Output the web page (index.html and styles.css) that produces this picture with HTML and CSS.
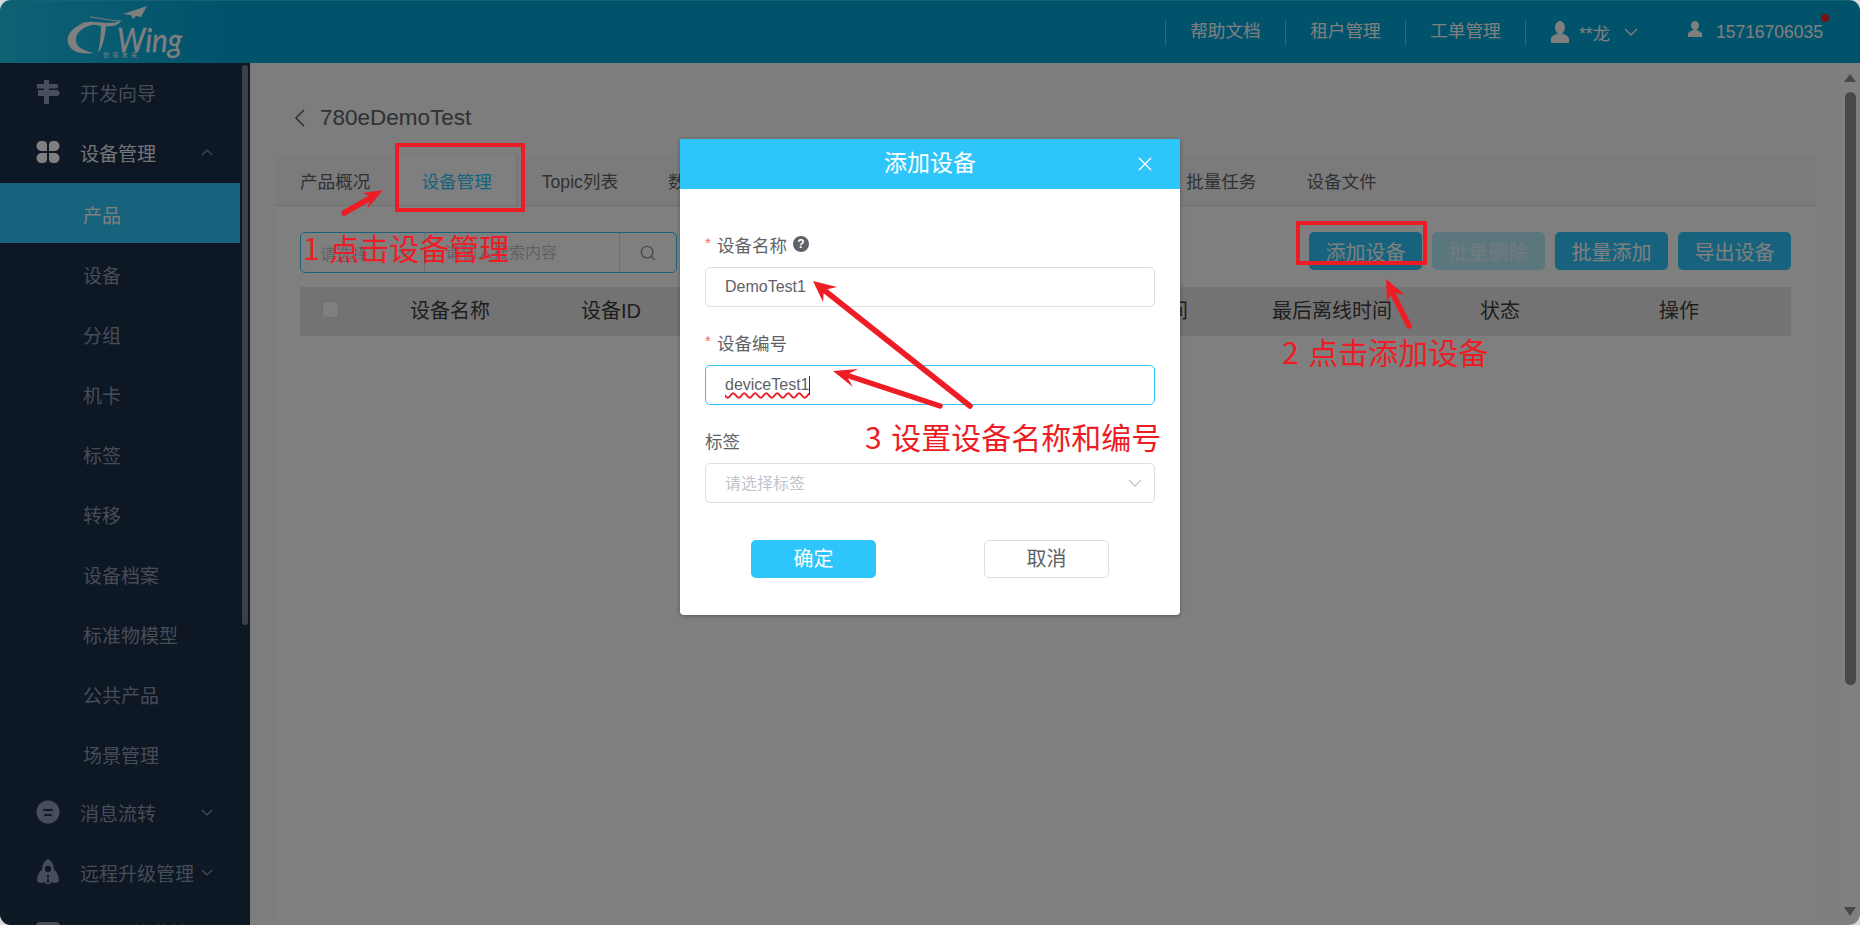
FILE: index.html
```html
<!DOCTYPE html>
<html lang="zh">
<head>
<meta charset="utf-8">
<title>添加设备</title>
<link rel="stylesheet" href="styles.css">
</head>
<body>
<div class="app">
  <header class="topbar">
    <svg class="logo" viewBox="60 0 130 60" width="130" height="60">
      <path class="logo-fill" d="M147 5 L123 13 L131 14 L133 18 L136 15 L141 16 Z"/>
      <path class="logo-fill" d="M90 22 C74 23 66 33 68 42 C70 50 80 54 94 52 C84 50 75 46 76 38 C76 31 84 25 96 23 Z"/>
      <path class="logo-fill" d="M78 24 C88 18 100 22 108 22 C114 22 119 21 122 19 C118 25 111 26 106 25 C105 35 103 46 98 52 C100 42 101 33 101 25 C92 23 85 23 78 24 Z"/>
      <path class="logo-line" d="M90 16 C100 17 112 20 120 20"/>
      <text class="logo-word" x="117" y="51" textLength="65" lengthAdjust="spacingAndGlyphs">Wing</text>
      <text class="logo-sub" x="103" y="56">智 领 未 来</text>
    </svg>
    <nav class="topnav">
      <a class="topnav-link">帮助文档</a>
      <a class="topnav-link">租户管理</a>
      <a class="topnav-link">工单管理</a>
      <div class="user-block">
        <svg class="user-icon-lg" viewBox="0 0 18 22" width="18" height="22"><ellipse cx="9" cy="6.5" rx="5" ry="6.5"/><path d="M0 22 V18 C0 15 4 14 6 12.5 H12 C14 14 18 15 18 18 V22 Z"/></svg>
        <span class="user-name">**龙</span>
        <svg class="chev-sm" viewBox="0 0 14 8" width="14" height="8"><path d="M1 1 L7 7 L13 1"/></svg>
        <svg class="user-icon-sm" viewBox="0 0 14 16" width="14" height="16"><ellipse cx="7" cy="4.5" rx="4" ry="4.5"/><path d="M0 16 V13 C0 11 3 10.500 5 9 H9 C11 10.500 14 11 14 13 V16 Z"/></svg>
        <span class="user-phone">15716706035</span>
        <i class="notify-dot"></i>
      </div>
    </nav>
  </header>

  <div class="workspace">
    <aside class="sidebar">
      <ul class="menu">
        <li class="menu-item">
          <svg class="menu-icon" viewBox="0 0 24 24" width="24" height="24"><path d="M8 0 H13 V4 H21 L22.500 6 L21 8.500 H13 V10 H22 L24 13 L22 16 H13 V24 H8 V16 H2 V10 H8 V8.500 H1 V4 H8 Z"/></svg>
          <span>开发向导</span>
        </li>
        <li class="menu-item menu-open">
          <svg class="menu-icon clover" viewBox="0 0 24 22" width="24" height="22"><path d="M6 0 H7 A4 4 0 0 1 11 4 V10 H5 A5 5 0 0 1 6 0 Z M18 0 H17 A4 4 0 0 0 13 4 V10 H19 A5 5 0 0 0 18 0 Z M6 22 H7 A4 4 0 0 0 11 18 V12 H5 A5 5 0 0 0 6 22 Z M18 22 H17 A4 4 0 0 1 13 18 V12 H19 A5 5 0 0 1 18 22 Z"/></svg>
          <span>设备管理</span>
          <svg class="menu-chev" viewBox="0 0 12 7" width="12" height="7"><path d="M1 6 L6 1 L11 6"/></svg>
        </li>
        <li class="menu-sub menu-active">产品</li>
        <li class="menu-sub">设备</li>
        <li class="menu-sub">分组</li>
        <li class="menu-sub">机卡</li>
        <li class="menu-sub">标签</li>
        <li class="menu-sub">转移</li>
        <li class="menu-sub">设备档案</li>
        <li class="menu-sub">标准物模型</li>
        <li class="menu-sub">公共产品</li>
        <li class="menu-sub">场景管理</li>
        <li class="menu-item">
          <svg class="menu-icon" viewBox="0 0 24 24" width="24" height="24"><circle cx="12" cy="12" r="11.500"/><path class="icon-cut" d="M8 10 H16 M9 15 H15"/></svg>
          <span>消息流转</span>
          <svg class="menu-chev" viewBox="0 0 12 7" width="12" height="7"><path d="M1 1 L6 6 L11 1"/></svg>
        </li>
        <li class="menu-item">
          <svg class="menu-icon" viewBox="0 0 24 26" width="24" height="26"><path d="M12 0 C16 2 18 7 18 11 C21 13 23 17 23 22 C21 24 19 25 16 23 L13 25 H11 L8 23 C5 25 3 24 1 22 C1 17 3 13 6 11 C6 7 8 2 12 0 Z"/><circle class="icon-hole" cx="12" cy="10" r="3.200"/><path class="icon-cut" d="M12 17 V18.500 M12 21 V22.500"/></svg>
          <span>远程升级管理</span>
          <svg class="menu-chev menu-chev-tight" viewBox="0 0 12 7" width="12" height="7"><path d="M1 1 L6 6 L11 1"/></svg>
        </li>
        <li class="menu-item menu-item-far">
          <svg class="menu-icon" viewBox="0 0 24 24" width="24" height="24"><rect x="0" y="0" width="24" height="24" rx="4"/></svg>
          <span>运维监控</span>
        </li>
      </ul>
      <div class="sidebar-thumb"></div>
    </aside>

    <main class="main">
      <div class="page">
        <div class="page-title">
          <svg class="back-icon" viewBox="0 0 11 18" width="11" height="18"><path d="M10 1 L2 9 L10 17"/></svg>
          <h1>780eDemoTest</h1>
        </div>
        <section class="card">
          <div class="tabs">
            <a class="tab">产品概况</a>
            <a class="tab tab-active">设备管理</a>
            <a class="tab">Topic列表</a>
            <a class="tab tab-hidden">数据解析</a>
            <a class="tab">批量任务</a>
            <a class="tab">设备文件</a>
          </div>
          <div class="card-body">
            <div class="toolbar">
              <div class="search">
                <div class="search-select">
                  <span>请选择</span>
                  <svg class="chev-grey" viewBox="0 0 14 8" width="14" height="8"><path d="M1 1 L7 7 L13 1"/></svg>
                </div>
                <div class="search-input">请输入搜索内容</div>
                <div class="search-btn">
                  <svg class="search-icon" viewBox="0 0 18 18" width="16" height="16"><circle cx="8" cy="8" r="6.500"/><path d="M13 13 L16.500 16.500"/></svg>
                </div>
              </div>
              <div class="actions">
                <button class="btn">添加设备</button>
                <button class="btn btn-disabled">批量删除</button>
                <button class="btn">批量添加</button>
                <button class="btn">导出设备</button>
              </div>
            </div>
            <div class="table-head">
              <span class="checkbox"></span>
              <span>设备名称</span>
              <span>设备ID</span>
              <span>设备编号</span>
              <span>最后上线时间</span>
              <span>最后离线时间</span>
              <span>状态</span>
              <span>操作</span>
            </div>
          </div>
        </section>
      </div>
      <div class="vscroll">
        <i class="arrow-up"></i>
        <div class="vscroll-thumb"></div>
        <i class="arrow-down"></i>
      </div>
    </main>
  </div>

  <div class="overlay"></div>

  <div class="modal">
    <div class="modal-head">
      <span class="modal-title">添加设备</span>
      <svg class="modal-close" viewBox="0 0 14 14" width="14" height="14"><path d="M1 1 L13 13 M13 1 L1 13"/></svg>
    </div>
    <div class="modal-body">
      <div class="field">
        <label class="field-label"><b class="req">*</b>设备名称<i class="help">?</i></label>
        <div class="field-box">DemoTest1</div>
      </div>
      <div class="field">
        <label class="field-label"><b class="req">*</b>设备编号</label>
        <div class="field-box field-focus"><span class="spell">deviceTest1</span><i class="caret"></i></div>
      </div>
      <div class="field">
        <label class="field-label">标签</label>
        <div class="field-box field-select">
          <span class="select-text">请选择标签</span>
          <svg class="chev-light" viewBox="0 0 14 8" width="14" height="8"><path d="M1 1 L7 7 L13 1"/></svg>
        </div>
      </div>
      <div class="modal-actions">
        <button class="modal-btn modal-ok">确定</button>
        <button class="modal-btn modal-cancel">取消</button>
      </div>
    </div>
  </div>

  <div class="mark mark-tab"></div>
  <div class="mark mark-btn"></div>
  <svg class="arrows" viewBox="0 0 1860 925" width="1860" height="925">
    <path class="arrow-line" d="M344 213 L372 197"/>
    <path class="arrow-head" d="M383 190 L367 209 L371 197 L363 193 Z"/>
    <path class="arrow-line" d="M1409 326 L1392 292"/>
    <path class="arrow-head" d="M1386 279 L1405 295 L1392 292 L1387 302 Z"/>
    <path class="arrow-line" d="M970 406 L824 290"/>
    <path class="arrow-head" d="M813 281 L837 287 L824 290 L823 302 Z"/>
    <path class="arrow-line" d="M940 406 L846 375"/>
    <path class="arrow-head" d="M833 371 L858 369 L846 375 L853 387 Z"/>
  </svg>
  <div class="note note-1">1 点击设备管理</div>
  <div class="note note-2">2 点击添加设备</div>
  <div class="note note-3">3 设置设备名称和编号</div>
</div>
</body>
</html>
```

FILE: styles.css
```css
* { box-sizing: border-box; }
html, body { margin: 0; padding: 0; background: #d8d8d8; }
body { font-family: "Liberation Sans", "Noto Sans CJK SC", sans-serif; color: #606266; }
button { font-family: inherit; border: 0; padding: 0; }
h1 { margin: 0; font-weight: 400; font-size: 22.500px; color: #606266; }
ul { margin: 0; padding: 0; list-style: none; }
i { font-style: normal; }

.app {
  position: relative;
  width: 1860px;
  height: 925px;
  overflow: hidden;
  border-radius: 11px;
  display: flex;
  flex-direction: column;
}

/* Top bar */
.topbar {
  flex: 0 0 63px;
  display: flex;
  align-items: center;
  padding-left: 60px;
  background: linear-gradient(90deg, #1cc4e8 0, #03a6d8 220px);
  border-top: 1px solid #2bc4e6;
}
.logo { flex: none; margin-top: -2px; }
.logo-fill { fill: #fff; }
.logo-line { fill: none; stroke: #fff; stroke-width: 1; }
.logo-word { font-family: "Lato", sans-serif; font-style: italic; font-size: 33px; fill: #fff; stroke: #fff; stroke-width: .3px; }
.logo-sub { font-family: "Noto Sans CJK SC", sans-serif; font-size: 6px; fill: #fff; word-spacing: 2px; }

.topnav { margin-left: auto; display: flex; align-items: center; padding-right: 37px; }
.topnav-link {
  width: 120px;
  height: 25px;
  margin-top: 1px;
  line-height: 23px;
  text-align: center;
  font-size: 17.600px;
  color: #fff;
  border-left: 1px solid rgba(255, 255, 255, .45);
}
.user-block {
  position: relative;
  display: flex;
  align-items: center;
  height: 25px;
  padding-left: 25px;
  border-left: 1px solid rgba(255, 255, 255, .45);
  color: #fff;
  font-size: 17.500px;
}
.user-icon-lg { fill: #fff; }
.user-name { margin-left: 10px; width: 32px; white-space: nowrap; }
.chev-sm { margin-left: 13px; fill: none; stroke: #fff; stroke-width: 1.300; }
.user-icon-sm { margin-left: 50px; margin-top: -6px; fill: #fff; }
.user-phone { margin-left: 14px; }
.notify-dot {
  position: absolute;
  right: -6px;
  top: -6px;
  width: 8px;
  height: 8px;
  border-radius: 50%;
  background: #fa2020;
}

/* Layout */
.workspace { flex: 1; min-height: 0; display: flex; }

/* Sidebar */
.sidebar { flex: 0 0 250px; display: flex; overflow: hidden; background: #1c2e48; }
.menu { flex: 0 0 240px; }
.menu-item {
  display: flex;
  align-items: center;
  height: 60px;
  padding: 0 0 2px 36px;
  font-size: 19px;
  color: #8e9bb0;
}
.menu-icon { flex: none; fill: #8e9bb4; margin-right: 20px; }
.icon-cut { fill: none; stroke: #1c2e48; stroke-width: 2; stroke-linecap: round; }
.icon-hole { fill: #1c2e48; }
.menu-open { color: #e6eaee; }
.menu-open .menu-icon { fill: #fff; }
.menu-chev { flex: none; margin-left: 45px; fill: none; stroke: #8e9bb0; stroke-width: 1.200; }
.menu-chev-tight { margin-left: 7px; }
.menu-item-far .menu-icon { margin-top: 4px; }
.menu-item-far span { margin-left: 33px; }
.menu-sub {
  height: 60px;
  padding-left: 83px;
  line-height: 67px;
  font-size: 19px;
  color: #8e9bb0;
}
.menu-active { background: #2ec6fa; color: #fff; }
.sidebar-thumb {
  flex: none;
  width: 6px;
  height: 560px;
  margin: 2px 0 0 2px;
  border-radius: 3px;
  background: #76808f;
}

/* Main */
.main { flex: 1; min-width: 0; display: flex; background: #fafafa; }
.page { flex: 1; min-width: 0; padding: 0 24px 0 25px; display: flex; flex-direction: column; }
.page-title { display: flex; align-items: center; height: 38px; margin: 36px 0 20px; padding-left: 19px; }
.back-icon { flex: none; fill: none; stroke: #606266; stroke-width: 1.600; margin-right: 15px; }

.card { flex: 1; background: #fff; }
.tabs {
  display: flex;
  height: 49px;
  background: #f6f7f8;
  border-bottom: 1px solid #dcdfe6;
}
.tab {
  flex: none;
  padding: 0 25px;
  line-height: 50px;
  font-size: 17.600px;
  color: #606266;
  white-space: nowrap;
}
.tab-active {
  height: 48px;
  margin-left: 1px;
  padding: 0 24px 0 25px;
  background: #fff;
  color: #2ec6fa;
  border-right: 1px solid #dcdfe6;
}
.tab-hidden { width: 518px; }

.card-body { padding: 26px 25px 0; }
.toolbar { display: flex; justify-content: space-between; align-items: flex-start; height: 41px; margin-bottom: 14px; }
.search {
  display: flex;
  width: 377px;
  height: 41px;
  border: 1px solid #2ec6fa;
  border-radius: 5px;
  font-size: 16px;
  color: #c0c4cc;
}
.search-select {
  flex: 0 0 124px;
  display: flex;
  align-items: center;
  justify-content: space-between;
  padding: 0 12px 0 19px;
  border-right: 1px solid #dcdfe6;
}
.chev-grey { fill: none; stroke: #c0c4cc; stroke-width: 1.300; }
.search-input { flex: 0 0 195px; padding-left: 20px; line-height: 39px; border-right: 1px solid #dcdfe6; }
.search-btn { flex: 1; display: flex; align-items: center; justify-content: center; }
.search-icon { fill: none; stroke: #909399; stroke-width: 1.500; }

.actions { display: flex; gap: 10px; }
.btn {
  width: 113px;
  height: 38px;
  border-radius: 5px;
  background: #2ec6fa;
  color: #fff;
  font-size: 20px;
}
.btn-disabled { background: #b8ecfc; color: #e6f8fe; }

.table-head {
  display: grid;
  grid-template-columns: 88px 171px 240px 247px 204px 208px 179px 1fr;
  align-items: center;
  height: 49px;
  padding: 0 0 4px 22px;
  background: #e6e6e6;
  font-size: 20px;
  color: #3c3c3c;
}
.checkbox { width: 17px; height: 17px; border: 1px solid #dcdfe6; border-radius: 3px; background: #fff; }

/* Page scrollbar */
.vscroll { flex: 0 0 20px; display: flex; flex-direction: column; align-items: center; background: #fff; }
.arrow-up, .arrow-down { width: 0; height: 0; border-left: 6.500px solid transparent; border-right: 6.500px solid transparent; }
.arrow-up { margin-top: 11px; border-bottom: 8px solid #909090; }
.arrow-down { margin-top: auto; margin-bottom: 9px; border-top: 9px solid #909090; }
.vscroll-thumb { width: 11px; height: 593px; margin-top: 10px; border-radius: 6px; background: #909090; }

/* Modal */
.overlay { position: absolute; inset: 0; background: rgba(0, 0, 0, .5); }
.modal {
  position: absolute;
  left: 680px;
  top: 139px;
  width: 500px;
  height: 476px;
  background: #fff;
  border-radius: 0 0 4px 4px;
  box-shadow: 0 1px 4px rgba(0, 0, 0, .3);
}
.modal-head {
  position: relative;
  height: 50px;
  background: #2ec6fa;
  color: #fff;
  font-size: 23px;
  line-height: 48px;
  text-align: center;
}
.modal-close { position: absolute; right: 28px; top: 18px; fill: none; stroke: #fff; stroke-width: 1.400; }
.modal-body { padding: 43px 25px 0; }
.field { margin-bottom: 23px; }
.field-label { display: flex; align-items: center; height: 24px; margin-bottom: 11px; font-size: 17.500px; color: #606266; }
.req { width: 12px; margin-top: -4px; color: #f56c6c; font-weight: 400; font-size: 15px; }
.help {
  width: 16px;
  height: 16px;
  margin-left: 6px;
  border-radius: 50%;
  background: #606266;
  color: #fff;
  font-size: 12px;
  font-weight: 700;
  line-height: 16px;
  text-align: center;
}
.field-box {
  display: flex;
  align-items: center;
  height: 40px;
  padding: 0 19px;
  border: 1px solid #dcdfe6;
  border-radius: 5px;
  font-size: 16px;
  color: #606266;
}
.field-focus { border-color: #2ec6fa; }
.spell { text-decoration: underline wavy #e8202a 1.500px; text-underline-offset: 2px; }
.caret { width: 1px; height: 19px; margin-left: -1px; background: #303133; }
.field-select { justify-content: space-between; color: #c0c4cc; padding-right: 12px; }
.select-text { margin-top: -3px; }
.chev-light { fill: none; stroke: #c0c4cc; stroke-width: 1.300; }
.modal-actions { display: flex; gap: 108px; margin: 37px 0 0 46px; }
.field:nth-child(3) { margin-bottom: 0; }
.modal-btn { width: 125px; height: 38px; padding-bottom: 4px; border-radius: 5px; font-size: 20px; }
.modal-ok { background: #2ec6fa; color: #fff; }
.modal-cancel { background: #fff; color: #606266; border: 1px solid #dcdfe6; }

/* Red screenshot annotations */
.mark { position: absolute; border: 4px solid #ee1c25; border-radius: 1px; }
.mark-tab { left: 395px; top: 143px; width: 130px; height: 69px; }
.mark-btn { left: 1296px; top: 221px; width: 131px; height: 44px; }
.arrows { position: absolute; left: 0; top: 0; }
.arrow-line { fill: none; stroke: #ee1c25; stroke-width: 5.500; stroke-linecap: round; }
.arrow-head { fill: #ee1c25; }
.note {
  position: absolute;
  font-family: "Noto Sans CJK SC", sans-serif;
  font-size: 30px;
  line-height: 40px;
  word-spacing: 3px;
  color: #ee1c25;
  white-space: nowrap;
}
.note-1 { left: 303px; top: 227px; }
.note-2 { left: 1282px; top: 331px; }
.note-3 { left: 865px; top: 416px; }
```
